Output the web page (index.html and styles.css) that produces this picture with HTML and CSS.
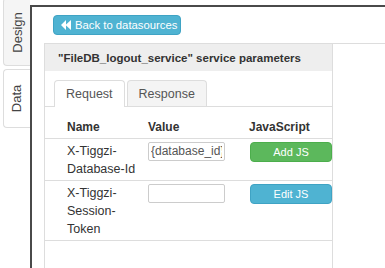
FILE: index.html
```html
<!DOCTYPE html>
<html lang="en">
<head>
    <meta charset="UTF-8">
    <title>Service parameters</title>
    <link rel="stylesheet" href="styles.css">
</head>
<body>
    <div class="app">
        <div class="sidebar">
            <div class="side-tab design"><span>Design</span></div>
            <div class="side-tab data active"><span>Data</span></div>
        </div>

        <div class="main">
            <button class="btn btn-back">
                <svg width="10" height="10" viewBox="0 0 10 10"><path d="M0 5 L5 0 V10 Z M4.5 5 L10 0 V10 Z" fill="#fff"/></svg>
                Back to datasources
            </button>

            <div class="panel-row">
                <div class="panel">
                    <div class="panel-heading">"FileDB_logout_service" service parameters</div>
                    <div class="tabs">
                        <div class="tab active">Request</div>
                        <div class="tab">Response</div>
                    </div>
                    <table class="params">
                        <tr>
                            <th class="col-name">Name</th>
                            <th class="col-value">Value</th>
                            <th class="col-js">JavaScript</th>
                        </tr>
                        <tr>
                            <td class="col-name">X-Tiggzi-<br>Database-Id</td>
                            <td class="col-value"><input type="text" value="{database_id}"></td>
                            <td class="col-js"><button class="btn btn-add">Add JS</button></td>
                        </tr>
                        <tr>
                            <td class="col-name">X-Tiggzi-<br>Session-<br>Token</td>
                            <td class="col-value"><input type="text" value=""></td>
                            <td class="col-js"><button class="btn btn-edit">Edit JS</button></td>
                        </tr>
                    </table>
                </div>
                <div class="panel-rest"></div>
            </div>
        </div>
    </div>
</body>
</html>
```

FILE: styles.css
```css
body {
    margin: 0;
    font-family: "Liberation Sans", Arial, sans-serif;
    font-size: 12.5px;
    color: #333;
    background: #fff;
}
.app {
    display: flex;
    height: 268px;
    overflow: hidden;
}
.sidebar {
    width: 30px;
    flex-shrink: 0;
}
.side-tab {
    margin-left: 3px;
    border: 1px solid #ddd;
    border-right: none;
    border-radius: 4px 0 0 4px;
    display: flex;
    align-items: center;
    justify-content: center;
    font-size: 13px;
    color: #444;
}
.side-tab span {
    transform: rotate(-90deg);
    white-space: nowrap;
}
.side-tab.design {
    height: 66px;
    margin-top: -2px;
    background: #f5f5f5;
}
.side-tab.data {
    height: 57px;
    margin-top: 3px;
    background: #fff;
}
.main {
    flex: 1;
    margin-top: 5px;
    border-top: 2px solid #4a4a4a;
    border-left: 2px solid #4a4a4a;
    padding: 8px 0 0 12px;
}
.btn {
    font-family: "Liberation Sans", Arial, sans-serif;
    font-size: 11px;
    color: #fff;
    border-radius: 4px;
    cursor: pointer;
    padding: 0;
    white-space: nowrap;
}
.btn-back {
    margin-left: 9px;
    width: 128px;
    height: 20px;
    font-size: 11.3px;
    background: #4fb3d2;
    border: 1px solid #3fa3c4;
    display: flex;
    align-items: center;
    gap: 4px;
    padding-left: 7px;
}
.panel-row {
    display: flex;
    margin-top: 8px;
}
.panel {
    width: 287px;
    height: 230px;
    border: 1px solid #ddd;
    border-bottom: none;
}
.panel-rest {
    flex: 1;
    border-top: 1px solid #ddd;
}
.panel-heading {
    background: #eee;
    font-size: 11.5px;
    font-weight: bold;
    height: 27px;
    line-height: 29px;
    padding-left: 13px;
    white-space: nowrap;
}
.tabs {
    display: flex;
    gap: 2px;
    padding: 9px 0 0 9px;
    border-bottom: 1px solid #ddd;
}
.tab {
    height: 25px;
    line-height: 26px;
    padding: 0 11px;
    border: 1px solid #ddd;
    border-bottom: none;
    border-radius: 4px 4px 0 0;
    background: #f4f4f4;
    margin-bottom: -1px;
    color: #555;
}
.tab.active {
    background: #fff;
    height: 26px;
}
.params {
    width: 100%;
    border-collapse: collapse;
    table-layout: fixed;
}
.params th, .params td {
    box-sizing: border-box;
    text-align: left;
    line-height: 18px;
    padding: 3px 8px 2px;
    border-bottom: 1px solid #ddd;
    vertical-align: top;
    white-space: nowrap;
}
.params th {
    font-size: 12px;
    vertical-align: bottom;
    height: 31px;
}
.params .col-name {
    padding-left: 22px;
    padding-right: 0;
    width: 95px;
}
.params .col-value {
    width: 101px;
}
.params .col-js {
    padding-right: 0;
}
.params input {
    display: block;
    width: 77px;
    height: 19px;
    box-sizing: border-box;
    border: 1px solid #ccc;
    border-radius: 2px;
    padding: 0 2px;
    font-family: "Liberation Sans", Arial, sans-serif;
    font-size: 12px;
    color: #555;
}
.btn-add, .btn-edit {
    display: block;
    width: 82px;
    height: 20px;
    margin-left: 1px;
}
.btn-add {
    background: #5cb85c;
    border: 1px solid #4cae4c;
}
.btn-edit {
    background: #4fb3d2;
    border: 1px solid #3fa3c4;
}
```
